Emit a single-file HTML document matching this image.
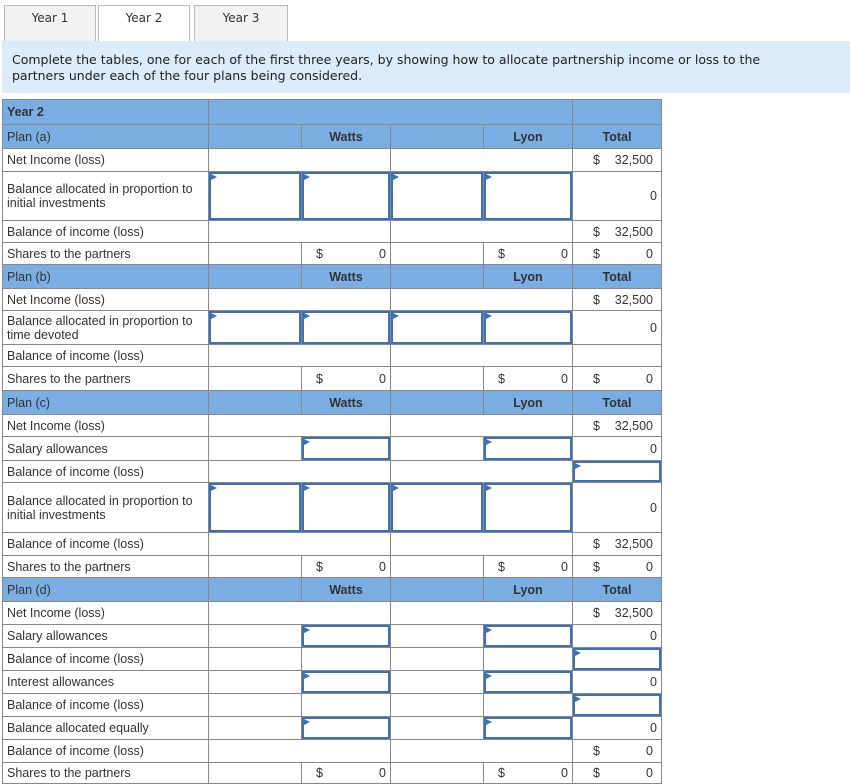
<!DOCTYPE html>
<html><head><meta charset="utf-8"><style>
body{margin:0;background:#fff;font-family:"Liberation Sans",Arial,sans-serif;color:#333;width:850px;height:784px;overflow:hidden;position:relative}
.tabs{position:absolute;top:5px;left:4px;height:36px;width:846px;border-bottom:1px solid #ccc}
.tab{position:absolute;top:0;height:35px;border:1px solid #bbb;border-bottom:none;background:#f2f2f2;line-height:25px;text-align:center;font-family:"DejaVu Sans",sans-serif;font-size:12px}
.tab.on{background:#fff;height:36px}
.intro{position:absolute;top:41px;left:2px;width:848px;height:52px;background:#dcebf8;font-family:"DejaVu Sans",sans-serif;font-size:12.5px;line-height:16px;padding:11px 50px 0 10px;box-sizing:border-box;color:#222}
table{position:absolute;top:99px;left:2px;border-collapse:collapse;table-layout:fixed;width:660px}
td{border:1px solid #888;padding:0 4px;font-size:12.5px;height:20px;overflow:hidden;white-space:nowrap;line-height:14px}
td.w{white-space:normal}
.b{background:#7aaee3}
.c{text-align:center;font-weight:bold;color:#333}
.L{border-left:1px solid #111}
td.in{padding:0}
.box{height:100%;border:2px solid #3c71b4;box-sizing:border-box;position:relative}
.box:before{content:"";position:absolute;left:0;top:0;border-left:6px solid #3c71b4;border-top:3px solid transparent;border-bottom:3px solid transparent}
.m{display:flex;justify-content:space-between;padding:0 4px 0 16px}
.r{text-align:right}
</style></head><body>
<div class="tabs">
<div class="tab" style="left:0;width:90px">Year 1</div>
<div class="tab on" style="left:94px;width:90px">Year 2</div>
<div class="tab" style="left:190px;width:92px">Year 3</div>
</div>
<div class="intro">Complete the tables, one for each of the first three years, by showing how to allocate partnership income or loss to the partners under each of the four plans being considered.</div>
<table>
<colgroup><col style="width:206px"><col style="width:93px"><col style="width:89px"><col style="width:93px"><col style="width:89px"><col style="width:89px"></colgroup>
<tr style="height:25px"><td class="b" style="font-weight:bold">Year 2</td><td class="b L" colspan="4"></td><td class="b"></td></tr>
<tr style="height:24px"><td class="b">Plan (a)</td><td class="b L"></td><td class="b c">Watts</td><td class="b L"></td><td class="b c">Lyon</td><td class="b c L">Total</td></tr>
<tr style="height:23px"><td>Net Income (loss)</td><td class="L" colspan="2"></td><td class="L" colspan="2"></td><td class="L"><div class="m"><span>$</span><span>32,500</span></div></td></tr>
<tr style="height:49px"><td class="w">Balance allocated in proportion to initial investments</td><td class="in L"><div class="box"></div></td><td class="in"><div class="box"></div></td><td class="in L"><div class="box"></div></td><td class="in"><div class="box"></div></td><td class="r L">0</td></tr>
<tr style="height:22px"><td>Balance of income (loss)</td><td class="L" colspan="2"></td><td class="L" colspan="2"></td><td class="L"><div class="m"><span>$</span><span>32,500</span></div></td></tr>
<tr style="height:22px"><td>Shares to the partners</td><td class="L"></td><td><div class="m" style="padding-left:10px;padding-right:0"><span>$</span><span>0</span></div></td><td class="L"></td><td><div class="m" style="padding-left:10px;padding-right:0"><span>$</span><span>0</span></div></td><td class="L"><div class="m"><span>$</span><span>0</span></div></td></tr>
<tr style="height:24px"><td class="b">Plan (b)</td><td class="b L"></td><td class="b c">Watts</td><td class="b L"></td><td class="b c">Lyon</td><td class="b c L">Total</td></tr>
<tr style="height:22px"><td>Net Income (loss)</td><td class="L" colspan="2"></td><td class="L" colspan="2"></td><td class="L"><div class="m"><span>$</span><span>32,500</span></div></td></tr>
<tr style="height:34px"><td class="w">Balance allocated in proportion to time devoted</td><td class="in L"><div class="box"></div></td><td class="in"><div class="box"></div></td><td class="in L"><div class="box"></div></td><td class="in"><div class="box"></div></td><td class="r L">0</td></tr>
<tr style="height:22px"><td>Balance of income (loss)</td><td class="L" colspan="2"></td><td class="L" colspan="2"></td><td class="L"></td></tr>
<tr style="height:24px"><td>Shares to the partners</td><td class="L"></td><td><div class="m" style="padding-left:10px;padding-right:0"><span>$</span><span>0</span></div></td><td class="L"></td><td><div class="m" style="padding-left:10px;padding-right:0"><span>$</span><span>0</span></div></td><td class="L"><div class="m"><span>$</span><span>0</span></div></td></tr>
<tr style="height:24px"><td class="b">Plan (c)</td><td class="b L"></td><td class="b c">Watts</td><td class="b L"></td><td class="b c">Lyon</td><td class="b c L">Total</td></tr>
<tr style="height:22px"><td>Net Income (loss)</td><td class="L" colspan="2"></td><td class="L" colspan="2"></td><td class="L"><div class="m"><span>$</span><span>32,500</span></div></td></tr>
<tr style="height:24px"><td>Salary allowances</td><td class="L"></td><td class="in"><div class="box"></div></td><td class="L"></td><td class="in"><div class="box"></div></td><td class="r L">0</td></tr>
<tr style="height:22px"><td>Balance of income (loss)</td><td class="L" colspan="2"></td><td class="L" colspan="2"></td><td class="in L"><div class="box"></div></td></tr>
<tr style="height:50px"><td class="w">Balance allocated in proportion to initial investments</td><td class="in L"><div class="box"></div></td><td class="in"><div class="box"></div></td><td class="in L"><div class="box"></div></td><td class="in"><div class="box"></div></td><td class="r L">0</td></tr>
<tr style="height:23px"><td>Balance of income (loss)</td><td class="L" colspan="2"></td><td class="L" colspan="2"></td><td class="L"><div class="m"><span>$</span><span>32,500</span></div></td></tr>
<tr style="height:22px"><td>Shares to the partners</td><td class="L"></td><td><div class="m" style="padding-left:10px;padding-right:0"><span>$</span><span>0</span></div></td><td class="L"></td><td><div class="m" style="padding-left:10px;padding-right:0"><span>$</span><span>0</span></div></td><td class="L"><div class="m"><span>$</span><span>0</span></div></td></tr>
<tr style="height:24px"><td class="b">Plan (d)</td><td class="b L"></td><td class="b c">Watts</td><td class="b L"></td><td class="b c">Lyon</td><td class="b c L">Total</td></tr>
<tr style="height:23px"><td>Net Income (loss)</td><td class="L" colspan="2"></td><td class="L" colspan="2"></td><td class="L"><div class="m"><span>$</span><span>32,500</span></div></td></tr>
<tr style="height:23px"><td>Salary allowances</td><td class="L"></td><td class="in"><div class="box"></div></td><td class="L"></td><td class="in"><div class="box"></div></td><td class="r L">0</td></tr>
<tr style="height:23px"><td>Balance of income (loss)</td><td class="L"></td><td></td><td class="L"></td><td></td><td class="in L"><div class="box"></div></td></tr>
<tr style="height:23px"><td>Interest allowances</td><td class="L"></td><td class="in"><div class="box"></div></td><td class="L"></td><td class="in"><div class="box"></div></td><td class="r L">0</td></tr>
<tr style="height:23px"><td>Balance of income (loss)</td><td class="L"></td><td></td><td class="L"></td><td></td><td class="in L"><div class="box"></div></td></tr>
<tr style="height:23px"><td>Balance allocated equally</td><td class="L"></td><td class="in"><div class="box"></div></td><td class="L"></td><td class="in"><div class="box"></div></td><td class="r L">0</td></tr>
<tr style="height:23px"><td>Balance of income (loss)</td><td class="L" colspan="2"></td><td class="L" colspan="2"></td><td class="L"><div class="m"><span>$</span><span>0</span></div></td></tr>
<tr style="height:21px"><td>Shares to the partners</td><td class="L"></td><td><div class="m" style="padding-left:10px;padding-right:0"><span>$</span><span>0</span></div></td><td class="L"></td><td><div class="m" style="padding-left:10px;padding-right:0"><span>$</span><span>0</span></div></td><td class="L"><div class="m"><span>$</span><span>0</span></div></td></tr>
</table>
</body></html>
